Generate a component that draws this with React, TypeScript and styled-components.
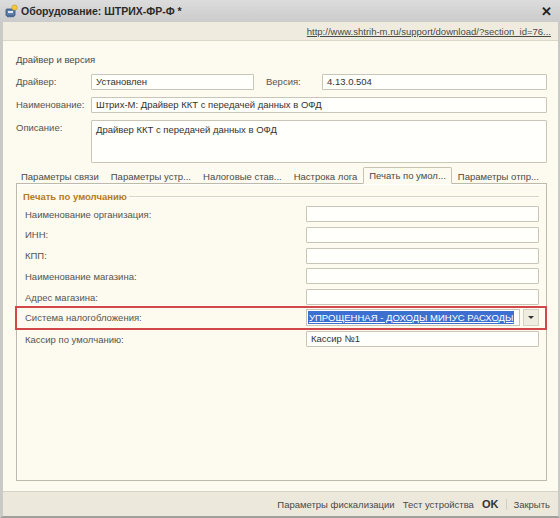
import styled, { createGlobalStyle, css } from 'styled-components';

const GlobalStyle = createGlobalStyle`
	html, body {
		margin: 0;
		padding: 0;
		background: #ffffff;
	}
	body {
		font-family: "Liberation Sans", Arial, sans-serif;
		font-size: 9.5px;
		color: #4a4a46;
	}
`;

const Window = styled.div`
	width: 560px;
	height: 518px;
	box-sizing: border-box;
	display: flex;
	flex-direction: column;
	background: #fdfaf0;
	border-left: 3px solid #c9c9c6;
	border-right: 2px solid #c9c9c6;
	border-bottom: 2px solid #9f9f9c;
`;

const TitleBar = styled.div`
	height: 22px;
	flex: none;
	display: flex;
	align-items: center;
	gap: 3px;
	padding: 0 8px 0 4px;
	margin-left: -3px;
	margin-right: -2px;
	background: linear-gradient(#dcdcdc, #cbcbcb);
`;

const Title = styled.span`
	flex: 1;
	font-weight: bold;
	font-size: 10.5px;
	color: #2a2a2a;
`;

const CloseGlyph = styled.span`
	font-weight: bold;
	font-size: 13px;
	color: #222;
	line-height: 1;
`;

const LinkBar = styled.div`
	height: 18px;
	flex: none;
	display: flex;
	align-items: center;
	justify-content: flex-end;
	padding: 0 7px;
	background: #efecdf;
	border-bottom: 1px solid #dcd8c8;
`;

const Link = styled.a`
	color: #4a4a46;
	text-decoration: underline;
	font-size: 9.5px;
`;

const Body = styled.div`
	flex: 1;
	display: flex;
	flex-direction: column;
	padding: 13px 11px 10px 13px;
`;

const GroupTitle = styled.div`
	height: 15px;
	margin-bottom: 5px;
	color: #4a4a46;
`;

const Row = styled.div`
	display: flex;
	align-items: flex-start;
	margin-bottom: 7px;
`;

const Label = styled.div<{ $w?: number; $indent?: number }>`
	width: ${(p) => p.$w ?? 75}px;
	padding-left: ${(p) => p.$indent ?? 0}px;
	box-sizing: border-box;
	flex: none;
	line-height: 16px;
	color: #55554f;
`;

const Field = styled.div<{ $w?: number; $h?: number }>`
	box-sizing: border-box;
	height: ${(p) => p.$h ?? 16}px;
	${(p) => (p.$w ? css`width: ${p.$w}px; flex: none;` : css`flex: 1; min-width: 0;`)}
	background: #fffffb;
	border: 1px solid #c9c6b7;
	border-radius: 1px;
	padding: ${(p) => ((p.$h ?? 16) > 16 ? '3px 4px' : '1px 4px')};
	color: #333330;
	line-height: 12px;
	white-space: nowrap;
	overflow: hidden;
`;

const Tabs = styled.div`
	display: flex;
	align-items: flex-end;
	height: 17px;
	margin-top: -3px;
	margin-left: -1px;
	position: relative;
	z-index: 1;
`;

const Tab = styled.div<{ $active?: boolean }>`
	box-sizing: border-box;
	height: 15px;
	padding: 0 5px 0 5px;
	line-height: 14px;
	color: #4a4a46;
	white-space: nowrap;
	border: 1px solid transparent;
	${(p) =>
		p.$active &&
		css`
			height: 17px;
			line-height: 15px;
			background: #fdfaf0;
			border-color: #c6c3b3;
			border-bottom-color: #fdfaf0;
			border-radius: 2px 2px 0 0;
		`}
`;

const Panel = styled.div`
	flex: 1;
	margin-top: -1px;
	border: 1px solid #bdbaa9;
	box-shadow: inset 1px 1px 0 #ffffff;
	padding: 6px 7px 0 6px;
	display: flex;
	flex-direction: column;
`;

const SectionHead = styled.div`
	display: flex;
	align-items: center;
	gap: 2px;
	height: 13px;
	margin-bottom: 3px;
	font-weight: bold;
	color: #b57b1e;

	&::after {
		content: '';
		flex: 1;
		height: 0;
		border-top: 1px solid #d9d5c6;
		border-bottom: 1px solid #ffffff;
	}
`;

const FormRow = styled.div<{ $marked?: boolean }>`
	display: flex;
	align-items: center;
	height: 16px;
	margin-bottom: 4.75px;
	padding-left: 2px;
	${(p) =>
		p.$marked &&
		css`
			height: 20px;
			margin: -4px -8px 1.5px -8px;
			padding: 0 6px 0 8px;
			border: 2px solid #d2474a;
		`}
`;

const FormLabel = styled.div`
	width: 281px;
	flex: none;
	color: #55554f;
`;

const Select = styled.div`
	flex: 1;
	min-width: 0;
	display: flex;
	align-items: center;
	gap: 3px;
	height: 17px;
`;

const SelectValue = styled.div`
	box-sizing: border-box;
	flex: 1;
	min-width: 0;
	height: 17px;
	background: #fffffb;
	border: 1px solid #c9c6b7;
	padding: 1px 1px;
	white-space: nowrap;
	overflow: hidden;
`;

const Selected = styled.span`
	background: #3d6fd0;
	color: #ffffff;
	padding: 0 1px;
	line-height: 13px;
	display: inline-block;
	text-decoration: underline;
`;

const DropButton = styled.div`
	box-sizing: border-box;
	width: 16px;
	height: 17px;
	flex: none;
	display: flex;
	align-items: center;
	justify-content: center;
	background: #efece0;
	border: 1px solid #d6d2c3;

	&::after {
		content: '';
		border-left: 3px solid transparent;
		border-right: 3px solid transparent;
		border-top: 3px solid #333;
	}
`;

const Footer = styled.div`
	height: 24px;
	flex: none;
	display: flex;
	align-items: center;
	justify-content: flex-end;
	padding: 0 4px;
	background: #ece8dc;
	border-top: 1px solid #d6d2c3;
`;

const FooterButton = styled.span<{ $bold?: boolean; $sep?: boolean }>`
	padding: 0 4px;
	color: #4a4a46;
	white-space: nowrap;
	${(p) =>
		p.$bold &&
		css`
			font-weight: bold;
			font-size: 11px;
			color: #333;
		`}
	${(p) =>
		p.$sep &&
		css`
			border-left: 1px solid #d3cfc0;
			margin-left: 4px;
			padding-left: 6px;
		`}
`;

const DeviceIcon = () => (
	<svg width="14" height="14" viewBox="0 0 14 14">
		<rect x="2" y="5" width="9" height="7" rx="1" fill="#5c7fa8" stroke="#2f4f78" strokeWidth="0.8" />
		<rect x="4" y="7" width="5" height="2" fill="#dfe8f2" />
		<rect x="3" y="12" width="7" height="1.2" fill="#4a6a90" />
		<circle cx="10.5" cy="3.5" r="2.6" fill="#f3c93a" stroke="#c9961a" strokeWidth="0.6" />
	</svg>
);

const printFields: { label: string; value?: string }[] = [
	{ label: 'Наименование организация:' },
	{ label: 'ИНН:' },
	{ label: 'КПП:' },
	{ label: 'Наименование магазина:' },
	{ label: 'Адрес магазина:' },
];

const tabs = [
	'Параметры связи',
	'Параметры устр...',
	'Налоговые став...',
	'Настрока лога',
	'Печать по умол...',
	'Параметры отпр...',
];

export default function App() {
	return (
		<>
			<GlobalStyle />
			<Window>
				<TitleBar>
					<DeviceIcon />
					<Title>Оборудование: ШТРИХ-ФР-Ф *</Title>
					<CloseGlyph>✕</CloseGlyph>
				</TitleBar>
				<LinkBar>
					<Link>http://www.shtrih-m.ru/support/download/?section_id=76...</Link>
				</LinkBar>
				<Body>
					<GroupTitle>Драйвер и версия</GroupTitle>
					<Row>
						<Label>Драйвер:</Label>
						<Field $w={163}>Установлен</Field>
						<Label $w={68} $indent={12}>Версия:</Label>
						<Field>4.13.0.504</Field>
					</Row>
					<Row>
						<Label>Наименование:</Label>
						<Field>Штрих-М: Драйвер ККТ с передачей данных в ОФД</Field>
					</Row>
					<Row>
						<Label>Описание:</Label>
						<Field $h={43}>Драйвер ККТ с передачей данных в ОФД</Field>
					</Row>
					<Tabs>
						{tabs.map((t, i) => (
							<Tab key={t} $active={i === 4}>
								{t}
							</Tab>
						))}
					</Tabs>
					<Panel>
						<SectionHead>Печать по умолчанию</SectionHead>
						{printFields.map((f) => (
							<FormRow key={f.label}>
								<FormLabel>{f.label}</FormLabel>
								<Field>{f.value}</Field>
							</FormRow>
						))}
						<FormRow $marked>
							<FormLabel>Система налогобложения:</FormLabel>
							<Select>
								<SelectValue>
									<Selected>УПРОЩЕННАЯ - ДОХОДЫ МИНУС РАСХОДЫ</Selected>
								</SelectValue>
								<DropButton />
							</Select>
						</FormRow>
						<FormRow>
							<FormLabel>Кассир по умолчанию:</FormLabel>
							<Field>Кассир №1</Field>
						</FormRow>
					</Panel>
				</Body>
				<Footer>
					<FooterButton>Параметры фискализации</FooterButton>
					<FooterButton>Тест устройства</FooterButton>
					<FooterButton $bold>OK</FooterButton>
					<FooterButton $sep>Закрыть</FooterButton>
				</Footer>
			</Window>
		</>
	);
}
